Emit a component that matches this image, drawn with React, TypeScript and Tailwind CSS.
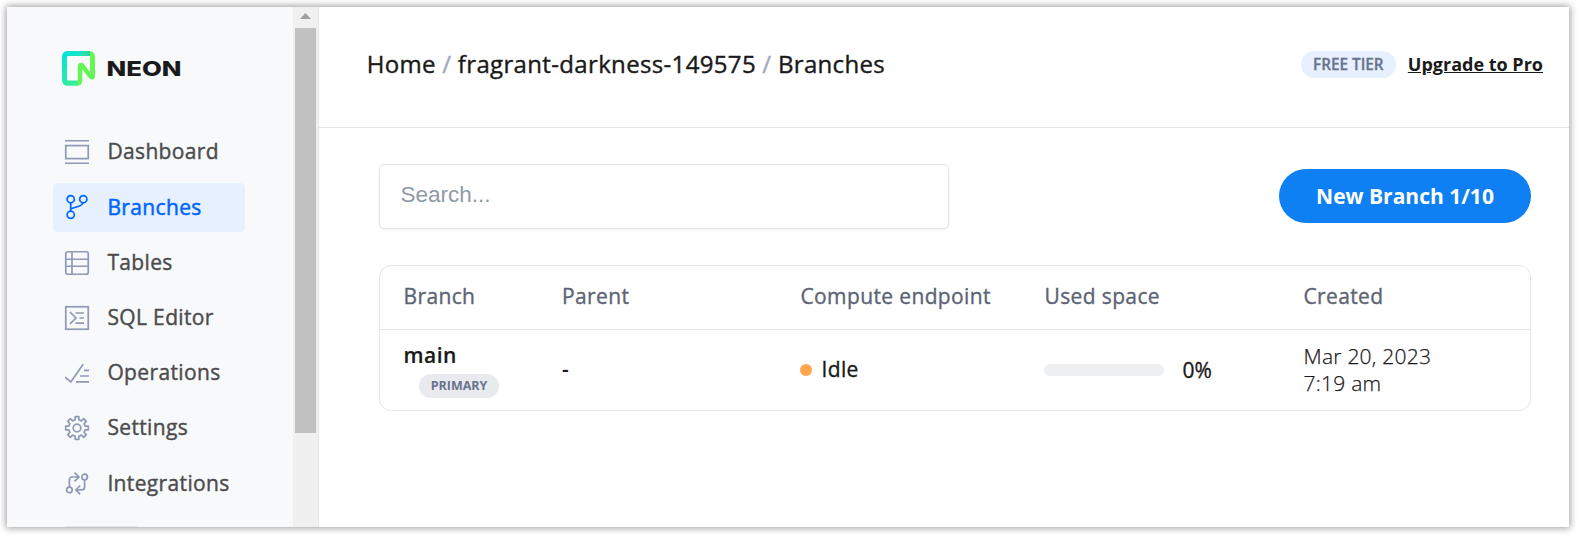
import type { ReactNode } from "react";

function Icon({ children }: { children: ReactNode }) {
  return (
    <svg width="26" height="26" viewBox="0 0 26 26" fill="none" stroke="currentColor" strokeWidth="1.7" className="shrink-0">
      {children}
    </svg>
  );
}

const DashboardIcon = () => (
  <Icon>
    <path d="M1 1.75H25M1 24.25H25" />
    <rect x="1.75" y="6.6" width="22.5" height="13" />
  </Icon>
);

const BranchesIcon = () => (
  <Icon>
    <circle cx="6.7" cy="5.2" r="3.6" />
    <circle cx="19.3" cy="5.2" r="3.6" />
    <circle cx="6.7" cy="20.8" r="3.6" />
    <path d="M6.7 8.9V17.1M18.8 8.9C18.3 11 17.2 11.5 15.6 12L6.9 14.8" />
  </Icon>
);

const TablesIcon = () => (
  <Icon>
    <rect x="1.75" y="1.75" width="22.5" height="22.5" rx="2" />
    <path d="M8 1.75V24.25M1.75 9.25H24.25M1.75 16.25H24.25" />
  </Icon>
);

const SqlIcon = () => (
  <Icon>
    <rect x="1.75" y="1.75" width="22.5" height="22.5" />
    <path d="M6 7L12 13L6 18.8M11.5 8H20M15.5 13H20M11.5 18.2H20" />
  </Icon>
);

const OperationsIcon = () => (
  <Icon>
    <path d="M1.2 17.2L6.8 22L19.2 4.2M20 10.4H25M16 16H25M12 21.8H25" />
  </Icon>
);

const SettingsIcon = () => (
  <Icon>
    <circle cx="13" cy="13" r="3.8" />
    <path
      strokeLinejoin="round"
      d="M11.2 1.7H14.8V4.8L17.4 5.9L19.7 3.7L22.3 6.3L20.1 8.6L21.2 11.2H24.3V14.8H21.2L20.1 17.4L22.3 19.7L19.7 22.3L17.4 20.1L14.8 21.2V24.3H11.2V21.2L8.6 20.1L6.3 22.3L3.7 19.7L5.9 17.4L4.8 14.8H1.7V11.2H4.8L5.9 8.6L3.7 6.3L6.3 3.7L8.6 5.9L11.2 4.8Z"
    />
  </Icon>
);

const IntegrationsIcon = () => (
  <Icon>
    <circle cx="5.4" cy="19.9" r="2.8" />
    <circle cx="20.6" cy="7" r="2.8" />
    <path d="M5.4 17V10Q5.4 7 8.4 7H14M10.5 2.6L14.9 7L10.5 11.4M20.6 9.8V16.9Q20.6 19.9 17.6 19.9H12M16.2 15.5L11.8 19.9L16.2 24.3" />
  </Icon>
);

const navItems = [
  { label: "Dashboard", icon: DashboardIcon },
  { label: "Branches", icon: BranchesIcon, active: true },
  { label: "Tables", icon: TablesIcon },
  { label: "SQL Editor", icon: SqlIcon },
  { label: "Operations", icon: OperationsIcon },
  { label: "Settings", icon: SettingsIcon },
  { label: "Integrations", icon: IntegrationsIcon },
];

function Logo() {
  return (
    <svg width="122" height="36" viewBox="0 0 122 36" role="img" aria-label="Neon">
      <defs>
        <linearGradient id="frame" x1="0" y1="0" x2="0.75" y2="1">
          <stop offset="0" stopColor="#00e0e0" />
          <stop offset="1" stopColor="#45f08a" />
        </linearGradient>
        <linearGradient id="top" x1="0" y1="0" x2="1" y2="0">
          <stop offset="0.6" stopColor="#2ed8a0" stopOpacity="0" />
          <stop offset="1" stopColor="#2fce9c" />
        </linearGradient>
      </defs>
      <path fill="url(#frame)" fillRule="evenodd" d="M6 0H28V5H6Q5 5 5 6V28.300Q5 29.500 6 29.500H16V34.700H6Q0 34.700 0 28.700V6Q0 0 6 0Z" />
      <path fill="url(#top)" d="M6 0H28V5H6Z" />
      <path fill="#63f655" d="M28 0Q33 1 33 6V25Q33 28.600 30 28.600Q28.300 28.600 27 27L20.300 18.500V29Q20.300 34.700 15.800 34.700V15.500Q15.800 11.800 19 11.800Q20.800 11.800 22 13.200L28 21Z" />
      <text x="44.500" y="24.800" fill="#1a1a1a" textLength="75" lengthAdjust="spacingAndGlyphs" className="font-['Inter'] text-[20.500px] font-extrabold">
        NEON
      </text>
    </svg>
  );
}

function Sidebar() {
  return (
    <aside className="flex w-[286px] flex-col overflow-hidden bg-[#f8f9fb] pl-[46px]">
      <div className="mt-11 ml-[9px] h-9">
        <Logo />
      </div>
      <nav className="mt-[40.700px] flex flex-col gap-[6.200px]">
        {navItems.map(({ label, icon: ItemIcon, active }) => (
          <a
            key={label}
            className={
              active
                ? "flex h-[49px] w-[192px] shrink-0 items-center gap-[17.400px] rounded-[5px] bg-[#e6f0ff] pl-[11px] text-[#0066ff]"
                : "flex h-[49px] w-[192px] shrink-0 items-center gap-[17.400px] rounded-[5px] pl-[11px] text-[#8e9ab5]"
            }
          >
            <ItemIcon />
            <span
              className={
                active
                  ? "text-[21px] font-medium tracking-[0.36px] [-webkit-text-stroke:0.5px]"
                  : "text-[21px] font-medium tracking-[0.36px] text-[#4c4c4c] [-webkit-text-stroke:0.4px]"
              }
            >
              {label}
            </span>
          </a>
        ))}
      </nav>
      <div className="mt-[18.100px] ml-3 h-px w-[72px] shrink-0 bg-[#e4e5e7]" />
    </aside>
  );
}

function Scrollbar() {
  return (
    <div className="flex w-[26px] flex-col items-center border-r border-[#e4e5e7] bg-[#f0f0f0] pr-px">
      <svg width="11" height="6" viewBox="0 0 11 6" className="mt-1.5">
        <path d="M0 6L5.500 0L11 6Z" fill="#a0a0a0" />
      </svg>
      <div className="mt-[9px] h-[405px] w-[21px] bg-[#c1c1c1]" />
    </div>
  );
}

function Header() {
  return (
    <header className="flex h-[121px] items-start justify-between border-b border-[#e4e5e7] pr-[26px] pl-[47.700px]">
      <div className="mt-[39px] flex gap-[6.400px] text-[24px] leading-9 font-medium tracking-[0.34px] text-[#1a1a1a] [-webkit-text-stroke:0.4px]">
        <span>Home</span>
        <span className="text-[#a3a8bd]">/</span>
        <span>fragrant-darkness-149575</span>
        <span className="text-[#a3a8bd]">/</span>
        <span>Branches</span>
      </div>
      <div className="mt-11 flex items-center gap-3">
        <span className="flex h-[27px] w-[95px] items-center justify-center rounded-full bg-[#e6f0ff] text-[15.300px] font-semibold text-[#68738f] [-webkit-text-stroke:0.3px]">FREE TIER</span>
        <a className="text-[18px] leading-[27px] font-bold text-[#1a1a1a] underline">Upgrade to Pro</a>
      </div>
    </header>
  );
}

function BranchTable() {
  return (
    <div className="mt-9 rounded-xl border border-[#e4e5e7] text-[21px] text-[#1a1a1a]">
      <div className="grid h-[63px] grid-cols-[158.500px_238.500px_244px_259px_1fr] items-center pb-0.5 pl-[23.500px] font-medium tracking-[0.37px] text-[#5b6474] [-webkit-text-stroke:0.35px]">
        <span>Branch</span>
        <span>Parent</span>
        <span>Compute endpoint</span>
        <span>Used space</span>
        <span>Created</span>
      </div>
      <div className="grid h-[81px] grid-cols-[158.500px_238.500px_243.500px_259.500px_1fr] items-center border-t border-[#e4e5e7] pl-[23.500px]">
        <div className="flex flex-col pb-px">
          <span className="leading-[29px] font-semibold tracking-[0.5px] [-webkit-text-stroke:0.2px]">main</span>
          <span className="mt-1 ml-[15.500px] flex h-6 w-20 items-center justify-center rounded-full bg-[#e8eaee] text-[12.500px] font-bold text-[#68738f]">PRIMARY</span>
        </div>
        <span className="font-semibold">-</span>
        <span className="-ml-px flex items-center gap-[10px] font-medium tracking-[0.37px] [-webkit-text-stroke:0.35px]">
          <span className="size-3 rounded-full bg-[#ffa64c]" />
          Idle
        </span>
        <span className="flex items-center gap-[18.500px] font-medium [-webkit-text-stroke:0.35px]">
          <span className="h-3 w-[120px] rounded-full bg-[#eeeff1]" />
          <span className="pt-0.5">0%</span>
        </span>
        <span className="leading-[27px] font-light tracking-[0.25px] [-webkit-text-stroke:0.25px]">
          Mar 20, 2023
          <br />
          7:19 am
        </span>
      </div>
    </div>
  );
}

export default function App() {
  return (
    <div className="h-[535px] w-[1577px] overflow-hidden bg-white pt-[7px] pl-[7px] font-['Open_Sans',sans-serif]">
      <div className="flex h-[520px] w-[1562px] bg-white shadow-[0_0_7px_1px_rgba(0,0,0,0.4)]">
        <Sidebar />
        <Scrollbar />
        <main className="flex-1">
          <Header />
          <div className="pt-9 pr-[38px] pl-[60px]">
            <div className="flex items-center justify-between">
              <input
                placeholder="Search..."
                className="h-[65px] w-[570px] rounded-[5px] border border-[#e4e5eb] pb-1 pl-[20.500px] font-['Liberation_Sans',sans-serif] text-[22.500px] shadow-[0_1px_3px_rgba(0,0,0,0.06)] placeholder:text-[#8f9aa6]"
              />
              <button className="mt-[-1px] h-[54px] w-[252px] rounded-full bg-[#0f80f3] pt-0.5 text-[21px] font-bold text-white">New Branch 1/10</button>
            </div>
            <BranchTable />
          </div>
        </main>
      </div>
    </div>
  );
}
